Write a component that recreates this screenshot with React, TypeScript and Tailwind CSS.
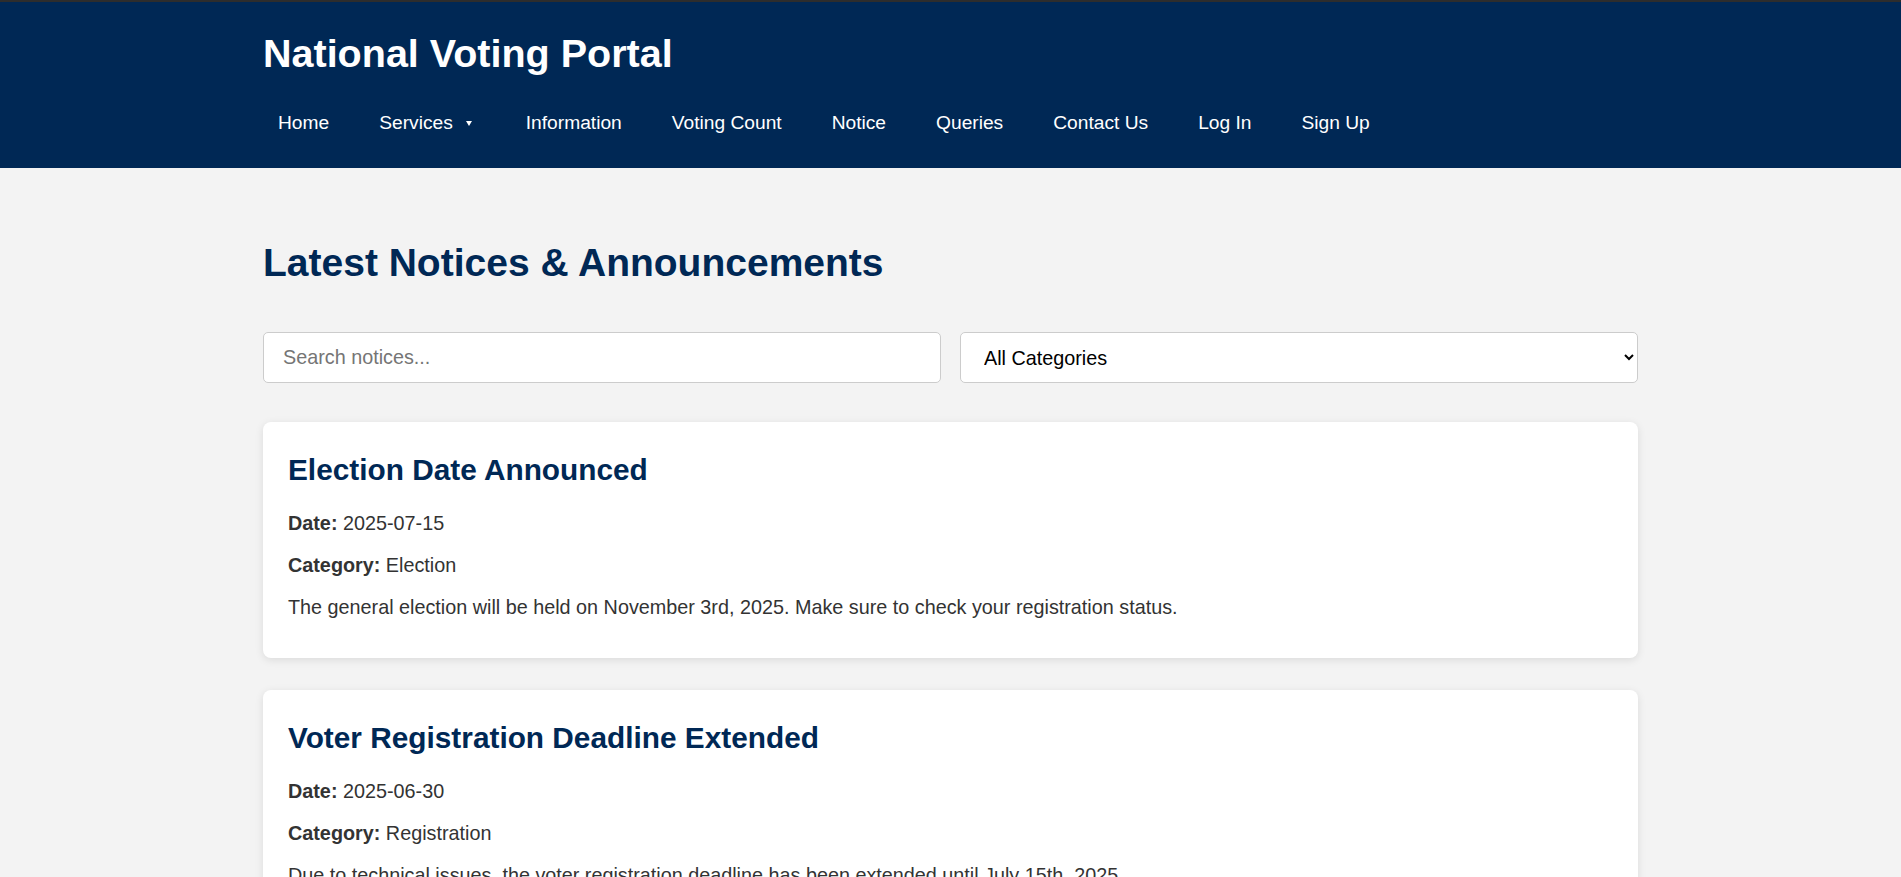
const navItems = ['Home', 'Services', 'Information', 'Voting Count', 'Notice', 'Queries', 'Contact Us', 'Log In', 'Sign Up']

const notices = [
  {
    title: 'Election Date Announced',
    date: '2025-07-15',
    category: 'Election',
    body: 'The general election will be held on November 3rd, 2025. Make sure to check your registration status.',
  },
  {
    title: 'Voter Registration Deadline Extended',
    date: '2025-06-30',
    category: 'Registration',
    body: 'Due to technical issues, the voter registration deadline has been extended until July 15th, 2025.',
  },
  {
    title: 'New Polling Stations Added',
    date: '2025-06-10',
    category: 'Polling',
    body: 'Several new polling stations have been added across the country to reduce waiting times.',
  },
]

export default function App() {
  return (
    <div className="min-h-screen bg-[#f3f3f3] font-['Liberation_Sans',Arial,sans-serif] text-[#333]">
      {/* Header */}
      <header className="bg-[#002855] border-t-2 border-[#2d2d2d] pt-[29px] pb-[34px]">
        <div className="mx-auto max-w-[1375px]">
          <h1 className="text-[39.5px] font-bold text-white leading-[45px]">National Voting Portal</h1>
          <nav className="mt-[36px] flex gap-[20px]">
            {navItems.map((item) => (
              <a key={item} href="#" className="flex items-center px-[15px] text-[19.2px] leading-[22px] text-white">
                {item}
                {item === 'Services' && (
                  <svg className="ml-[13px] mr-[4px]" width="6" height="5" viewBox="0 0 6 5">
                    <path d="M0 0h6L3 5z" fill="white" />
                  </svg>
                )}
              </a>
            ))}
          </nav>
        </div>
      </header>

      {/* Main */}
      <main className="mx-auto max-w-[1375px] pt-[72px]">
        <h2 className="text-[39px] font-bold leading-[45px] text-[#002855]">Latest Notices &amp; Announcements</h2>

        <div className="mt-[47px] flex gap-[19px]">
          <input
            type="text"
            placeholder="Search notices..."
            className="h-[51px] flex-1 rounded-[5px] border border-[#ccc] bg-white px-[19px] text-[19.8px] text-[#333] placeholder:text-[#757575] outline-none"
          />
          <select className="h-[51px] flex-1 rounded-[5px] border border-[#ccc] bg-white px-[19px] text-[19.8px] text-black outline-none">
            <option>All Categories</option>
            <option>Election</option>
            <option>Registration</option>
          </select>
        </div>

        <div className="mt-[39px] flex flex-col gap-[32px] pb-[40px]">
          {notices.map((n) => (
            <div key={n.title} className="rounded-[8px] bg-white px-[25px] pt-[30px] pb-[39px] shadow-[0_2px_8px_rgba(0,0,0,0.1)]">
              <h3 className="mb-[25px] text-[29.8px] font-bold leading-[35px] text-[#002855]">{n.title}</h3>
              <div className="flex flex-col gap-[19px] text-[19.8px] leading-[23px]">
                <p>
                  <strong>Date:</strong> {n.date}
                </p>
                <p>
                  <strong>Category:</strong> {n.category}
                </p>
                <p>{n.body}</p>
              </div>
            </div>
          ))}
        </div>
      </main>
    </div>
  )
}
